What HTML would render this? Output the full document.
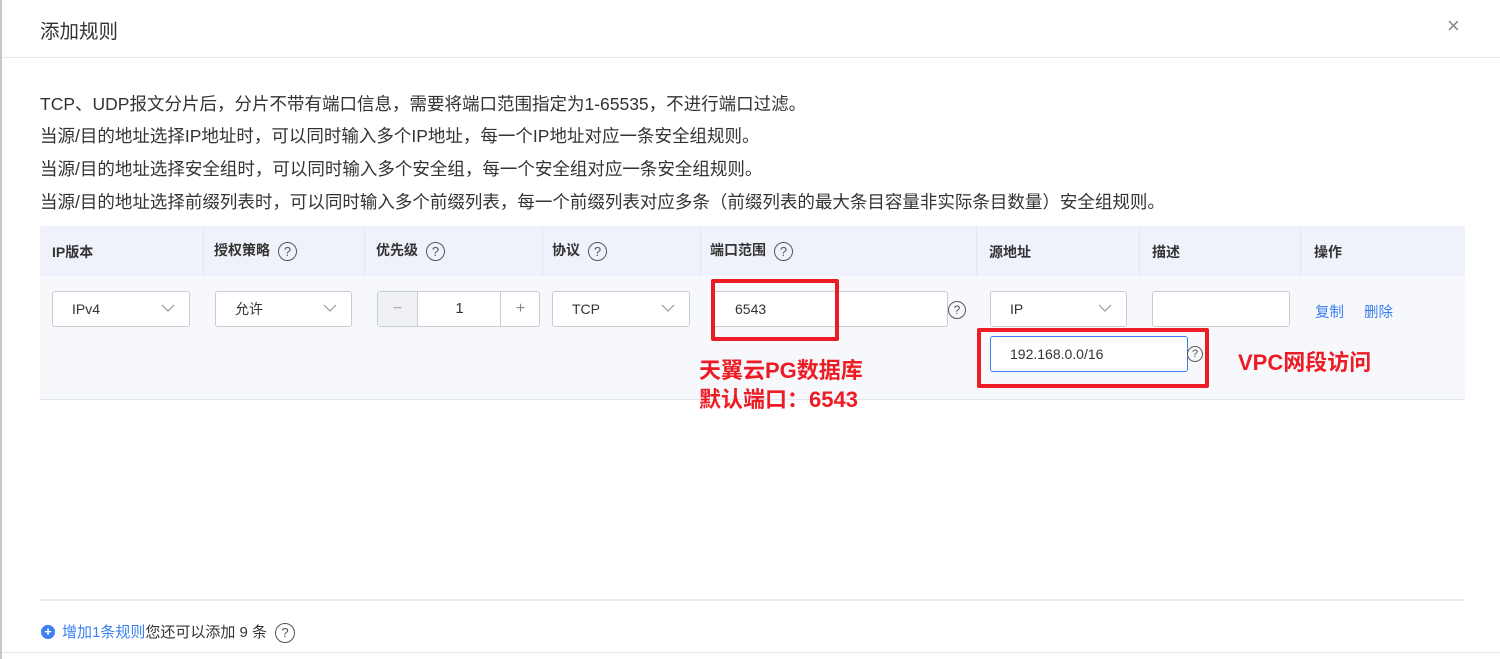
<!DOCTYPE html>
<html><head><meta charset="utf-8"><style>
*{margin:0;padding:0;box-sizing:border-box}
body{width:1500px;height:659px;background:#fff;position:relative;overflow:hidden;font-family:"Liberation Sans","Noto Sans CJK SC",sans-serif;color:#333}
.a{position:absolute}
.lb{left:0;top:0;width:2px;height:659px;background:#c8c8c8}
.t{font-size:17.5px;left:40px;white-space:nowrap;color:#333}
.th{font-size:14px;font-weight:bold;color:#333;top:242px}
.q{display:inline-block;width:19px;height:19px;border:1.3px solid #555;border-radius:50%;font-size:13px;line-height:17px;text-align:center;font-weight:normal;color:#555;vertical-align:middle;margin-left:8px}
.sel{height:36px;border:1px solid #c8ccd4;border-radius:3px;background:#fff;font-size:14px;line-height:34px;padding-left:19px;color:#333}
.sel svg{position:absolute;right:14px;top:12px}
.red{border:4px solid #ed1c24;border-radius:2px}
.rt{color:#ed1c24;font-weight:bold;font-size:22px;white-space:nowrap}
.vl{width:1px;background:#e2e6ef;top:226px;height:50px}
</style></head><body>
<div class="a lb"></div>
<div class="a" style="left:40px;top:15px;font-size:19.5px;color:#333">添加规则</div>
<div class="a" style="left:1447px;top:13px;font-size:22px;color:#888">×</div>
<div class="a" style="left:2px;top:57px;width:1498px;height:1px;background:#e4e6ec"></div>
<div class="a t" style="top:91px">TCP、UDP报文分片后，分片不带有端口信息，需要将端口范围指定为1-65535，不进行端口过滤。</div>
<div class="a t" style="top:123px">当源/目的地址选择IP地址时，可以同时输入多个IP地址，每一个IP地址对应一条安全组规则。</div>
<div class="a t" style="top:156px">当源/目的地址选择安全组时，可以同时输入多个安全组，每一个安全组对应一条安全组规则。</div>
<div class="a t" style="top:189px">当源/目的地址选择前缀列表时，可以同时输入多个前缀列表，每一个前缀列表对应多条（前缀列表的最大条目容量非实际条目数量）安全组规则。</div>

<div class="a" style="left:40px;top:226px;width:1425px;height:50px;background:#eff2fa;border-radius:3px 3px 0 0"></div>
<div class="a" style="left:40px;top:276px;width:1425px;height:124px;background:#f7f8fc;border-bottom:1px solid #e2e5ee"></div>
<div class="a vl" style="left:203px"></div><div class="a vl" style="left:364px"></div><div class="a vl" style="left:542px"></div><div class="a vl" style="left:700px"></div><div class="a vl" style="left:976px"></div><div class="a vl" style="left:1139px"></div><div class="a vl" style="left:1300px"></div>
<div class="a th" style="left:52px">IP版本</div>
<div class="a th" style="left:214px;top:240px">授权策略<span class="q">?</span></div>
<div class="a th" style="left:376px;top:240px">优先级<span class="q">?</span></div>
<div class="a th" style="left:552px;top:240px">协议<span class="q">?</span></div>
<div class="a th" style="left:710px;top:240px">端口范围<span class="q">?</span></div>
<div class="a th" style="left:989px">源地址</div>
<div class="a th" style="left:1152px">描述</div>
<div class="a th" style="left:1314px">操作</div>

<div class="a sel" style="left:52px;top:291px;width:138px">IPv4<svg width="14" height="9"><path d="M1 1l6 6 6-6" fill="none" stroke="#999" stroke-width="1.2"/></svg></div>
<div class="a sel" style="left:215px;top:291px;width:137px">允许<svg width="14" height="9"><path d="M1 1l6 6 6-6" fill="none" stroke="#999" stroke-width="1.2"/></svg></div>
<div class="a sel" style="left:377px;top:291px;width:163px;padding:0"><div class="a" style="left:0;top:0;width:40px;height:34px;background:#eff1f5;border-right:1px solid #c8ccd4;text-align:center;color:#aaa;font-size:16px">−</div><div class="a" style="left:40px;top:0;width:83px;text-align:center;font-size:15px">1</div><div class="a" style="left:122px;top:0;width:40px;height:34px;border-left:1px solid #c8ccd4;text-align:center;color:#888;font-size:16px">+</div></div>
<div class="a sel" style="left:552px;top:291px;width:138px">TCP<svg width="14" height="9"><path d="M1 1l6 6 6-6" fill="none" stroke="#999" stroke-width="1.2"/></svg></div>
<div class="a sel" style="left:711px;top:291px;width:237px;padding-left:23px">6543</div>
<div class="a q" style="left:940px;top:301px;width:18px;height:18px;font-size:12px;line-height:16px">?</div>
<div class="a sel" style="left:990px;top:291px;width:137px">IP<svg width="14" height="9"><path d="M1 1l6 6 6-6" fill="none" stroke="#999" stroke-width="1.2"/></svg></div>
<div class="a sel" style="left:1152px;top:291px;width:138px"></div>
<div class="a" style="left:1315px;top:301px;font-size:14.5px;color:#3b7ff0">复制</div>
<div class="a" style="left:1364px;top:301px;font-size:14.5px;color:#3b7ff0">删除</div>
<div class="a sel" style="left:990px;top:336px;width:198px;border-color:#3b7ff0">192.168.0.0/16</div>
<div class="a q" style="left:1179px;top:346px;width:16px;height:16px;font-size:11px;line-height:14px">?</div>

<div class="a red" style="left:711px;top:279px;width:128px;height:62px"></div>
<div class="a red" style="left:977px;top:328px;width:232px;height:60px"></div>
<div class="a rt" style="left:699px;top:353px">天翼云PG数据库</div>
<div class="a rt" style="left:699px;top:382px">默认端口：6543</div>
<div class="a rt" style="left:1238px;top:345px">VPC网段访问</div>

<div class="a" style="left:40px;top:599px;width:1425px;height:2px;background:#e8eaf0"></div>
<div class="a" style="left:41px;top:625px;width:14px;height:14px;border-radius:50%;background:#3b7ff0;color:#fff;font-size:13px;line-height:13px;text-align:center;font-weight:bold">+</div>
<div class="a" style="left:62px;top:621px;font-size:15px;white-space:nowrap"><span style="color:#3b7ff0">增加1条规则</span>您还可以添加 9 条<span class="q" style="width:20px;height:20px">?</span></div>
<div class="a" style="left:2px;top:652px;width:1498px;height:1px;background:#e4e6ec"></div>
</body></html>
